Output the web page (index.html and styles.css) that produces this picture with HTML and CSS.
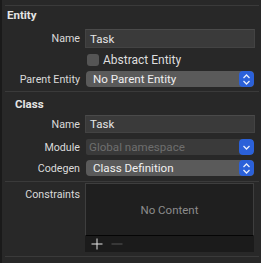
FILE: index.html
```html
<!DOCTYPE html>
<html>
<head>
    <title>Entity Inspector</title>
    <link rel="stylesheet" href="styles.css">
</head>
<body>
    <div class="panel">
        <div class="rule"></div>

        <div class="section-title">Entity</div>

        <div class="row row-field">
            <div class="label">Name</div>
            <div class="text-field">Task</div>
        </div>

        <div class="row row-check">
            <div class="label"></div>
            <div class="checkbox"></div>
            <div class="check-label">Abstract Entity</div>
        </div>

        <div class="row row-popup">
            <div class="label">Parent Entity</div>
            <div class="popup">
                <span class="popup-text">No Parent Entity</span>
                <span class="stepper">
                    <svg width="9" height="11" viewBox="0 0 9 11"><path d="M1.5 4 L4.5 1 L7.5 4 M1.5 7 L4.5 10 L7.5 7" fill="none" stroke="#e8eefc" stroke-width="1.3"/></svg>
                </span>
            </div>
        </div>

        <div class="rule rule-mid"></div>

        <div class="section-title section-class">Class</div>

        <div class="row row-field2">
            <div class="label">Name</div>
            <div class="text-field">Task</div>
        </div>

        <div class="row row-module">
            <div class="label">Module</div>
            <div class="popup popup-disabled">
                <span class="popup-text">Global namespace</span>
                <span class="stepper">
                    <svg width="9" height="9" viewBox="0 0 9 9"><path d="M1.5 3 L4.5 6 L7.5 3" fill="none" stroke="#e8eefc" stroke-width="1.3"/></svg>
                </span>
            </div>
        </div>

        <div class="row row-codegen">
            <div class="label">Codegen</div>
            <div class="popup">
                <span class="popup-text">Class Definition</span>
                <span class="stepper">
                    <svg width="9" height="11" viewBox="0 0 9 11"><path d="M1.5 4 L4.5 1 L7.5 4 M1.5 7 L4.5 10 L7.5 7" fill="none" stroke="#e8eefc" stroke-width="1.3"/></svg>
                </span>
            </div>
        </div>

        <div class="rule rule-mid rule-tight"></div>

        <div class="row row-table">
            <div class="label label-top">Constraints</div>
            <div class="table">
                <div class="table-body">No Content</div>
                <div class="table-bar">
                    <svg width="12" height="12" viewBox="0 0 12 12"><path d="M6 0.5 V11.5 M0.5 6 H11.5" stroke="#e6e6e6" stroke-width="1"/></svg>
                    <svg class="minus" width="12" height="12" viewBox="0 0 12 12"><path d="M0.5 6 H11.5" stroke="#555" stroke-width="1"/></svg>
                </div>
            </div>
        </div>

        <div class="rule rule-bottom"></div>
    </div>
</body>
</html>
```

FILE: styles.css
```css
body {
    margin: 0;
    background-color: #282828;
    font-family: Roboto, "Liberation Sans", sans-serif;
    font-size: 11.5px;
    color: #dedede;
}
.panel {
    width: 259px;
    height: 263px;
    border-left: 2px solid #1a1a1a;
    overflow: hidden;
    padding-top: 5px;
    box-sizing: border-box;
}
.rule {
    height: 1px;
    background-color: #3a3a3a;
    margin-left: 3px;
}
.rule-mid {
    margin-top: 4px;
}
.rule-tight {
    margin-top: 5px;
}
.rule-bottom {
    margin-top: 4px;
}
.section-title {
    font-weight: 700;
    line-height: 13px;
    margin-top: 3px;
    padding-left: 5px;
    color: #e4e4e4;
}
.section-class {
    margin-top: 6px;
    padding-left: 13px;
}
.row {
    display: flex;
    align-items: center;
}
.label {
    width: 83px;
    flex-shrink: 0;
    padding-right: 5px;
    box-sizing: border-box;
    text-align: right;
    color: #dadada;
    font-size: 10.7px;
}
.row-field {
    height: 19px;
    margin-top: 7px;
}
.row-check {
    height: 17px;
    margin-top: 3px;
}
.row-popup {
    height: 16px;
    margin-top: 3px;
}
.row-field2 {
    height: 18px;
    margin-top: 4px;
}
.row-module {
    height: 16px;
    margin-top: 6px;
}
.row-codegen {
    height: 16px;
    margin-top: 5px;
}
.row-table {
    align-items: flex-start;
    margin-top: 1px;
}
.label-top {
    padding-top: 5px;
}
.text-field {
    width: 170px;
    height: 100%;
    box-sizing: border-box;
    background-color: #3a3a3a;
    border: 1px solid #434343;
    border-top-color: #4a4a4a;
    padding-left: 4px;
    display: flex;
    align-items: center;
    color: #e6e6e6;
    font-size: 11.5px;
}
.checkbox {
    width: 12px;
    height: 12px;
    border-radius: 3px;
    background-color: #555555;
    margin-left: 2px;
}
.check-label {
    margin-left: 4px;
    font-size: 12px;
}
.popup {
    width: 168px;
    height: 100%;
    margin-left: 1px;
    border-radius: 4px;
    background-color: #5a5a5a;
    display: flex;
    align-items: center;
    justify-content: space-between;
    overflow: hidden;
}
.popup-text {
    padding-left: 7px;
    font-size: 11.6px;
    color: #f0f0f0;
}
.popup-disabled {
    background-color: #3a3a3a;
    border-radius: 2px 4px 4px 2px;
}
.popup-disabled .popup-text {
    padding-left: 3px;
    color: #6e6e6e;
}
.stepper {
    width: 15px;
    height: 100%;
    background-color: #2b61d9;
    border-radius: 4px;
    display: flex;
    align-items: center;
    justify-content: center;
}
.table {
    width: 169px;
}
.table-body {
    height: 53px;
    box-sizing: border-box;
    background-color: #1f1f1f;
    border: 1px solid #3e3e3e;
    border-bottom: 1px solid #050505;
    display: flex;
    align-items: center;
    justify-content: center;
    color: #8c8c8c;
    font-size: 11.5px;
}
.table-bar {
    height: 16px;
    background-color: #1b1b1b;
    display: flex;
    align-items: center;
    padding-left: 6px;
    gap: 8px;
}
```
